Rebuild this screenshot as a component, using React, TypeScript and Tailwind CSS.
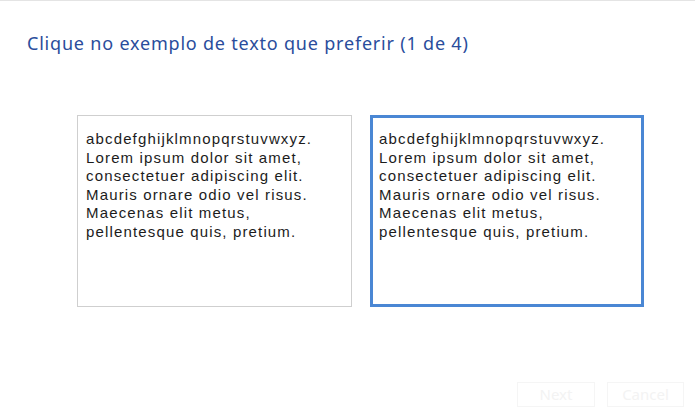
export default function App() {
  const lines = [
    "abcdefghijklmnopqrstuvwxyz.",
    "Lorem ipsum dolor sit amet,",
    "consectetuer adipiscing elit.",
    "Mauris ornare odio vel risus.",
    "Maecenas elit metus,",
    "pellentesque quis, pretium.",
  ];
  const Sample = ({ selected }: { selected?: boolean }) => (
    <div
      className={
        selected
          ? "w-[274px] h-[192px] border-[3px] border-[#4a87d4] pl-[6px] pt-[12px]"
          : "w-[275px] h-[192px] border border-[#cfcfcf] pl-[8px] pt-[14px]"
      }
    >
      {lines.map((l) => (
        <div
          key={l}
          className="text-[15px] leading-[18.5px] tracking-[1.15px] text-[#1c1c1c] whitespace-nowrap"
          style={{ fontFamily: '"Liberation Sans", Arial, sans-serif' }}
        >
          {l}
        </div>
      ))}
    </div>
  );
  return (
    <div
      className="w-[695px] h-[419px] bg-white border-t border-[#e4e4e4] flex flex-col"
      style={{ fontFamily: '"Noto Sans", "Open Sans", sans-serif' }}
    >
      <div className="pl-[27px] pt-[30px] text-[18px] leading-[24px] tracking-[0.8px] text-[#2a4d9c]">
        Clique no exemplo de texto que preferir (1 de 4)
      </div>
      <div className="flex gap-[18px] pl-[77px] pt-[60px]">
        <Sample />
        <Sample selected />
      </div>
      <div className="flex-1" />
      <div className="flex justify-end gap-[12px] pr-[11px] pb-[12px]">
        <div className="w-[78px] h-[25px] border border-[#f5f5f5] flex items-center justify-center text-[15px] text-[#f3f3f3]">
          Next
        </div>
        <div className="w-[77px] h-[25px] border border-[#f5f5f5] flex items-center justify-center text-[15px] text-[#f3f3f3]">
          Cancel
        </div>
      </div>
    </div>
  );
}
